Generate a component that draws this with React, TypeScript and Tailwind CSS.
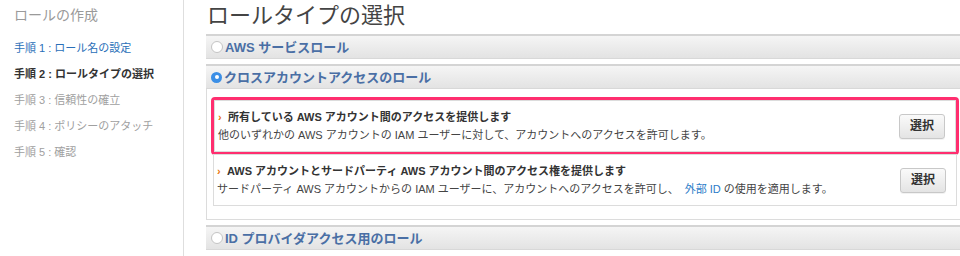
import React from "react";

const FONT = { fontFamily: '"Liberation Sans", "Noto Sans CJK JP", sans-serif' };

const steps = [
  { label: "手順 1 : ロール名の設定", cls: "text-[#2a6fb8]" },
  { label: "手順 2 : ロールタイプの選択", cls: "text-[#333] font-bold" },
  { label: "手順 3 : 信頼性の確立", cls: "text-[#a0a0a0]" },
  { label: "手順 4 : ポリシーのアタッチ", cls: "text-[#a0a0a0]" },
  { label: "手順 5 : 確認", cls: "text-[#a0a0a0]" },
];

function Radio({ checked }: { checked?: boolean }) {
  if (checked) {
    return (
      <span className="w-[11px] h-[11px] rounded-full bg-[#3b8fe6] flex items-center justify-center shrink-0">
        <span className="w-[4px] h-[4px] rounded-full bg-white" />
      </span>
    );
  }
  return <span className="w-[12px] h-[12px] rounded-full bg-white border border-[#c4c4c4] shrink-0" />;
}

function PanelHeader({ title, checked }: { title: string; checked?: boolean }) {
  return (
    <div className="h-[25px] flex items-center gap-[2px] pl-[5px] border-t-2 border-b border-t-[#d4d4d4] border-b-[#d8d8d8] bg-gradient-to-b from-[#f5f5f5] to-[#e3e3e3]">
      <Radio checked={checked} />
      <span className="text-[13px] font-bold text-[#4a6fa5] leading-none">{title}</span>
    </div>
  );
}

function SelectButton() {
  return (
    <button className="w-[46px] h-[25px] rounded-[3px] border border-[#c8c8c8] bg-gradient-to-b from-[#fafafa] to-[#e4e4e4] text-[12px] font-bold text-[#333] shadow-[0_1px_0_rgba(0,0,0,0.05)]">
      選択
    </button>
  );
}

function Option({ title, children }: { title: string; children: React.ReactNode }) {
  return (
    <div className="h-[52px] border border-[#dcdcdc] bg-white flex items-center pl-[3px] pr-[10px]">
      <div className="flex-1 flex flex-col gap-[4px]">
        <div className="flex items-center text-[11px] leading-[14px]">
          <span className="text-[#e8740c] font-bold w-[10px] text-[11px]">›</span>
          <span className="font-bold text-[#333]">{title}</span>
        </div>
        <div className="text-[11px] leading-[14px] text-[#444]">{children}</div>
      </div>
      <SelectButton />
    </div>
  );
}

export default function App() {
  return (
    <div className="w-[960px] h-[256px] bg-white flex overflow-hidden" style={FONT}>
      <aside className="w-[184px] shrink-0 border-r border-[#dedede] pl-[14px] pt-[5px]">
        <div className="text-[14px] text-[#9a9a9a] leading-[20px]">ロールの作成</div>
        <ul className="mt-[10px] flex flex-col">
          {steps.map((s) => (
            <li key={s.label} className={`text-[11px] leading-[26px] ${s.cls}`}>
              {s.label}
            </li>
          ))}
        </ul>
      </aside>
      <main className="flex-1 pl-[22px] -mr-[2px] pt-[3px]">
        <h1 className="text-[22px] leading-[26px] text-[#444] pl-[1px]">ロールタイプの選択</h1>
        <div className="mt-[5px]">
          <PanelHeader title="AWS サービスロール" />
        </div>
        <div className="mt-[5px]">
          <PanelHeader title="クロスアカウントアクセスのロール" checked />
          <div className="border border-t-0 border-[#dcdcdc] pt-[8px] pb-[13px] pl-[6px] pr-[4px]">
            <div className="rounded-[4px] border-[3px] border-[#ff2e6f] -mx-[2px] p-0">
              <Option title="所有している AWS アカウント間のアクセスを提供します">
                他のいずれかの AWS アカウントの IAM ユーザーに対して、アカウントへのアクセスを許可します。
              </Option>
            </div>
            <div className="-mt-[1px]">
              <Option title="AWS アカウントとサードパーティ AWS アカウント間のアクセス権を提供します">
                サードパーティ AWS アカウントからの IAM ユーザーに、アカウントへのアクセスを許可し、
                <span className="text-[#2a7bc8] ml-[6px]">外部 ID</span> の使用を適用します。
              </Option>
            </div>
          </div>
        </div>
        <div className="mt-[5px]">
          <PanelHeader title="ID プロバイダアクセス用のロール" />
        </div>
      </main>
    </div>
  );
}
